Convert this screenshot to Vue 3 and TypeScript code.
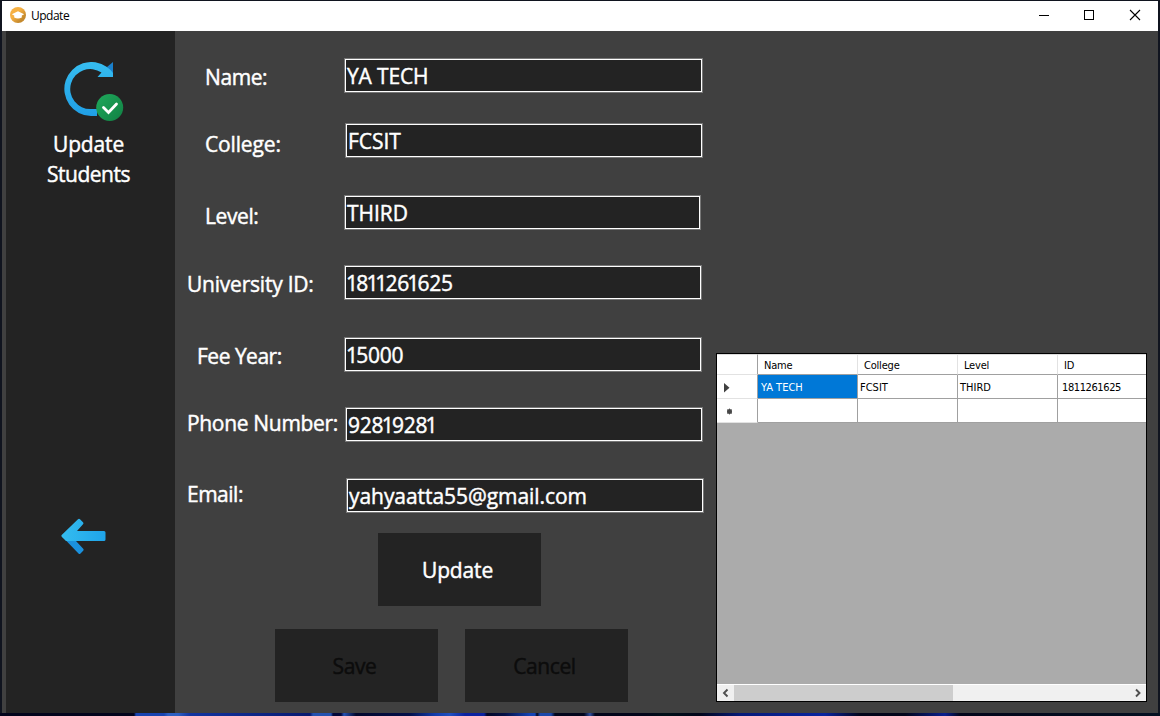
<script setup lang="ts">
interface Field {
  key: string
  label: string
  value: string
}

const fields: Field[] = [
  { key: 'name', label: 'Name:', value: 'YA TECH' },
  { key: 'college', label: 'College:', value: 'FCSIT' },
  { key: 'level', label: 'Level:', value: 'THIRD' },
  { key: 'uid', label: 'University ID:', value: '1811261625' },
  { key: 'fee', label: 'Fee Year:', value: '15000' },
  { key: 'phone', label: 'Phone Number:', value: '92819281' },
  { key: 'email', label: 'Email:', value: 'yahyaatta55@gmail.com' },
]

const columns: string[] = ['Name', 'College', 'Level', 'ID']
const record: string[] = ['YA TECH', 'FCSIT', 'THIRD', '1811261625']

// Numbers are set with a narrow "1", so they are split around runs of that digit.
function pieces(value: string): string[] {
  return /^\d+$/.test(value) ? value.split(/(1+)/).filter((p) => p !== '') : [value]
}
</script>

<template>
  <div class="desktop">
    <div class="window">
      <header class="titlebar">
        <svg class="app-icon" width="16" height="16" viewBox="0 0 16 16">
          <defs>
            <linearGradient id="gold" x1="0" y1="0" x2="1" y2="1">
              <stop offset="0.4" stop-color="#f6b042" />
              <stop offset="0.75" stop-color="#c58a2e" />
            </linearGradient>
          </defs>
          <circle cx="8" cy="8" r="8" fill="url(#gold)" />
          <path d="M1.800 7.200 8 4.200l6.200 3-2.400 1.300v2Q8 12.500 4.200 10.500V8.500z" fill="#fff" />
        </svg>
        <span class="title">Update</span>
        <svg class="controls" width="104" height="12" viewBox="0 0 104 12">
          <path d="M0 6.500h10" stroke="#000" fill="none" />
          <rect x="45.500" y="1.500" width="9" height="9" stroke="#000" fill="none" />
          <path d="M91 1l10 10M101 1 91 11" stroke="#000" stroke-width="1.100" fill="none" />
        </svg>
      </header>
      <main class="body">
        <aside class="sidebar">
          <svg class="refresh" width="60" height="60" viewBox="0 0 60 60">
            <defs>
              <linearGradient id="ring" x1="0" y1="0" x2="0" y2="1">
                <stop offset="0" stop-color="#36bdf0" />
                <stop offset="1" stop-color="#209fe6" />
              </linearGradient>
              <linearGradient id="leaf" x1="0" y1="0" x2="1" y2="1">
                <stop offset="0" stop-color="#1fa95c" />
                <stop offset="1" stop-color="#118043" />
              </linearGradient>
            </defs>
            <path d="M49 0v15L43 5z" fill="#1a80cc" />
            <path d="M49 15H33.500l4-4.500A20 20 0 1 0 27 47h6v7h-6A27 27 0 1 1 43 5Q47 8 49 11z" fill="url(#ring)" />
            <circle cx="45.700" cy="45.500" r="13.500" fill="url(#leaf)" />
            <path d="m39.500 45.500 5 5 8-8.500" fill="none" stroke="#fff" stroke-width="2.800" stroke-linecap="round" />
          </svg>
          <h1 class="heading"><span class="h-update">Update</span><span class="h-students">Students</span></h1>
          <svg class="back" width="45" height="37" viewBox="0 0 45 37">
            <defs>
              <linearGradient id="shaft" x1="0" y1="0" x2="1" y2="0">
                <stop offset="0" stop-color="#34bcef" />
                <stop offset="1" stop-color="#1fa4e9" />
              </linearGradient>
            </defs>
            <path d="M4 21.500 17.500 35.500q1 1 2 0l2.700-2.700q1-1 0-2L15 23z" fill="#1b91dd" />
            <path d="M.7 17 17 1.300q1-1 2 0l3 3q1 1 0 2L16 13h27q1.500 0 1.500 1.500v7q0 1.500-1.500 1.500H5L.7 18.700q-.7-.9 0-1.700z" fill="url(#shaft)" />
          </svg>
        </aside>
        <section class="form">
          <div v-for="f in fields" :key="f.key" class="row" :class="'row-' + f.key">
            <label class="label">{{ f.label }}</label>
            <div class="field"><span v-for="(p, i) in pieces(f.value)" :key="i" :class="{ one: p[0] === '1' }">{{ p }}</span></div>
          </div>
          <button class="btn btn-update">Update</button>
          <div class="actions">
            <button class="btn" disabled>Save</button>
            <button class="btn" disabled>Cancel</button>
          </div>
        </section>
        <section class="grid">
          <div class="line head">
            <div class="cell marker"></div>
            <div v-for="c in columns" :key="c" class="cell">{{ c }}</div>
          </div>
          <div class="line">
            <div class="cell marker">
              <svg width="6" height="10" viewBox="0 0 6 10"><path d="M0 0 5.500 4.800 0 9.500z" fill="#404040" /></svg>
            </div>
            <div v-for="(v, i) in record" :key="v" class="cell" :class="{ selected: i === 0, number: i === 3 }">{{ v }}</div>
          </div>
          <div class="line">
            <div class="cell marker star">
              <svg width="7" height="7" viewBox="0 0 7 7"><circle cx="3.500" cy="3.500" r="2.500" fill="#484848" /><path d="M3.500 .5v6M1 1.500l5 4M6 1.500l-5 4" stroke="#484848" stroke-width=".8" /></svg>
            </div>
            <div v-for="c in columns" :key="c" class="cell"></div>
          </div>
          <div class="scrollbar">
            <svg width="17" height="16" viewBox="0 0 17 16"><path d="M10.500 4.500 7 8l3.500 3.500" fill="none" stroke="#505050" stroke-width="1.900" /></svg>
            <div class="thumb"></div>
            <svg width="17" height="16" viewBox="0 0 17 16"><path d="M7 4.500 10.500 8 7 11.500" fill="none" stroke="#505050" stroke-width="1.900" /></svg>
          </div>
        </section>
      </main>
    </div>
  </div>
</template>

<style>
html,
body {
  margin: 0;
  overflow: hidden;
}
</style>

<style scoped>
.desktop {
  box-sizing: border-box;
  width: 1160px;
  height: 716px;
  padding: 1px 2px 3px;
  background:
    linear-gradient(90deg, #02041c 0 134px, #1843b0 136px 164px, #2d5fc2 168px 178px, #1234a0 190px, #0c2380 270px, #081a70 310px, #2452b0 313px 331px, #03083a 333px 341px, #2452b4 344px, #02072c 356px, #03104a 410px, #123cac 435px, #2050c0 450px, #0b22a0 465px 484px, #020626 487px, #041046 505px, #1443b4 530px 535px, #02061c 537px, #1c48aa 540px 551px, #02061c 555px 584px, #3050a0 590px, #02051a 595px 645px, #001018 665px, #02051a 700px, #061a78 740px, #0a25a0 825px, #02051a 860px, #02051a 905px, #0a2090 945px, #02051a 960px, #041020 1160px) 0 100% / 1160px 3px no-repeat,
    #10141f;
  font-family: 'Open Sans', 'Noto Sans', sans-serif;
}
.window {
  display: flex;
  flex-direction: column;
  height: 712px;
  background: #404040;
}
.titlebar {
  display: flex;
  align-items: center;
  flex: none;
  box-sizing: border-box;
  height: 30px;
  padding: 0 15px 2px 8px;
  background: #fff;
  color: #000;
}
.title {
  margin-left: 5px;
  padding-top: 2px;
  font-size: 12px;
  letter-spacing: -0.5px;
  line-height: 16px;
}
.controls {
  margin-left: auto;
}
.body {
  display: flex;
  height: 682px;
  padding-left: 4px;
}
.sidebar {
  display: flex;
  flex-direction: column;
  flex: none;
  width: 169px;
  background: #232323;
}
.refresh {
  margin: 31px 0 0 58px;
}
.heading,
.form {
  font-size: 21px;
  font-weight: 400;
  -webkit-text-stroke: 0.45px currentColor;
}
.heading {
  display: flex;
  flex-direction: column;
  align-items: center;
  width: 165px;
  margin: 7px 0 0;
  color: #fff;
  line-height: 30px;
}
.h-update {
  letter-spacing: -0.15px;
}
.h-students {
  letter-spacing: -0.5px;
}
.back {
  margin: 329px 0 0 54.500px;
}
.form {
  flex: none;
  width: 541px;
  color: #fff;
}
.row {
  display: flex;
  height: 35px;
  white-space: nowrap;
}
.label {
  box-sizing: border-box;
  flex: none;
  width: 169px;
  padding-left: 12px;
  letter-spacing: -0.4px;
  line-height: 35px;
}
.field {
  box-sizing: border-box;
  width: 359px;
  height: 35px;
  padding: 1px 0 0 2px;
  border: 1px solid #777;
  box-shadow: inset 0 0 0 1px #fff;
  background: #232323;
  letter-spacing: -0.06px;
  line-height: 33px;
}
.one {
  margin: 0 1.400px 0 -1.600px;
  letter-spacing: -3.200px;
}
.one:first-child {
  margin-left: -1px;
}
.row-name { margin-top: 27px; }
.row-name .label { padding: 2px 0 0 30px; }
.row-name .field { letter-spacing: -0.15px; }
.row-college { margin-top: 30px; }
.row-college .label { width: 170px; padding: 4px 0 0 30px; letter-spacing: -0.15px; }
.row-college .field { width: 358px; }
.row-level { margin-top: 37px; }
.row-level .label { padding: 4px 0 0 30px; }
.row-level .field { width: 357px; }
.row-uid { margin-top: 35px; }
.row-uid .label { padding-top: 2px; letter-spacing: -0.22px; }
.row-uid .field { width: 358px; letter-spacing: -0.25px; }
.row-fee { margin-top: 37px; }
.row-fee .label { padding: 2px 0 0 22px; letter-spacing: -0.5px; }
.row-fee .field { width: 358px; letter-spacing: -0.25px; }
.row-phone { margin-top: 35px; }
.row-phone .label { width: 170px; letter-spacing: -0.32px; line-height: 33px; }
.row-phone .field { width: 358px; letter-spacing: -0.25px; }
.row-email { margin-top: 36px; }
.row-email .label { width: 171px; letter-spacing: -0.5px; line-height: 33px; }
.row-email .field { width: 358px; }
.btn {
  display: block;
  width: 163px;
  height: 73px;
  padding: 0 4px 0 0;
  border: 0;
  background: #232323;
  color: #fff;
  font: inherit;
  letter-spacing: -0.15px;
}
.btn:disabled {
  color: #0c0c0c;
  letter-spacing: -0.4px;
}
.btn-update {
  margin: 20px 0 0 203px;
}
.actions {
  display: flex;
  gap: 27px;
  margin: 23px 0 0 100px;
}
.grid {
  display: flex;
  flex-direction: column;
  box-sizing: border-box;
  width: 431px;
  height: 349px;
  margin-top: 322px;
  border: 1px solid #000;
  background: #ababab;
  color: #000;
  font-family: 'DejaVu Sans Condensed', 'DejaVu Sans', sans-serif;
  font-size: 11px;
}
.line {
  display: grid;
  grid-template-columns: 41px 100px 100px 100px 88px;
  height: 24px;
}
.head {
  height: 21px;
}
.cell {
  display: flex;
  align-items: center;
  box-sizing: border-box;
  border-right: 1px solid #a0a0a0;
  border-bottom: 1px solid #a0a0a0;
  padding: 2px 0 0 2px;
  background: #fff;
}
.cell:last-child {
  border-right: 0;
}
.head .cell {
  padding-left: 6px;
  border-right-color: #e2e2e2;
  border-top: 1px solid #ddd;
  letter-spacing: -0.2px;
}
.marker {
  padding-left: 7px;
  border-bottom-color: #e2e2e2;
}
.head .marker {
  border-right-color: #a0a0a0;
}
.star {
  padding-left: 9px;
}
.selected {
  padding-left: 3px;
  background: #0078d7;
  color: #fff;
}
.number {
  padding-left: 4px;
  letter-spacing: -0.4px;
}
.scrollbar {
  display: flex;
  box-sizing: border-box;
  height: 17px;
  margin-top: auto;
  border-top: 1px solid #fff;
  background: #f0f0f0;
}
.thumb {
  width: 219px;
  margin-right: auto;
  background: #cdcdcd;
}
</style>
